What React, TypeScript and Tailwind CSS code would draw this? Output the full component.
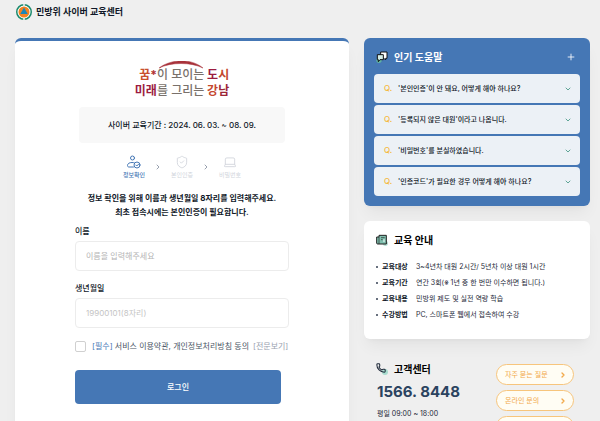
import { Check, ChevronDown, ChevronRight, Laptop, Phone, Plus, ShieldCheck } from 'lucide-react'

const QUESTIONS = [
  "'본인인증'이 안 돼요, 어떻게 해야 하나요?",
  "'등록되지 않은 대원'이라고 나옵니다.",
  "'비밀번호'를 분실하였습니다.",
  "'인증코드'가 필요한 경우 어떻게 해야 하나요?",
]

const GUIDE = [
  { label: '교육대상', value: '3~4년차 대원 2시간/ 5년차 이상 대원 1시간' },
  { label: '교육기간', value: '연간 3회(※ 1년 중 한 번만 이수하면 됩니다.)' },
  { label: '교육내용', value: '민방위 제도 및 실전 역량 학습' },
  { label: '수강방법', value: 'PC, 스마트폰 웹에서 접속하여 수강' },
]

const LINKS = ['자주 묻는 질문', '온라인 문의']

// ---------------------------------------------------------------------------
// Icons
// ---------------------------------------------------------------------------

function Emblem() {
  return (
    <svg viewBox="0 0 32 32" className="size-4" aria-hidden="true">
      <circle cx="16" cy="16" r="14.500" fill="#fff" stroke="#1c8a6d" strokeWidth="3" />
      <path d="M16 0v5M16 27v5" stroke="#efefef" strokeWidth="3" />
      <circle cx="16" cy="16" r="11" fill="#f58220" />
      <path d="M16 7l7.500 13h-15z" fill="#1b86b8" />
    </svg>
  )
}

function PersonCheckIcon() {
  return (
    <svg viewBox="0 0 28 28" className="size-3.5" fill="none" stroke="#4577b5" strokeWidth="2" strokeLinecap="round" strokeLinejoin="round" aria-hidden="true">
      <circle cx="11" cy="6" r="4" />
      <path d="M13 24H4c-2 0-3-1-3-3 0-4 4-6 9-6 2 0 3 .3 4.500.8" />
      <circle cx="20" cy="20" r="6" />
      <path d="M17.500 20l2 2 3.500-3.500" />
    </svg>
  )
}

function ChatIcon() {
  return (
    <svg viewBox="0 0 36 36" className="size-3" aria-hidden="true">
      <circle cx="9" cy="28" r="8" fill="#5fb3a3" />
      <path d="M14 3h19v19h-4v5l-5-5H14z" fill="#fff" stroke="#111" strokeWidth="3" />
      <path d="M4 11h18v15H12l-5 6v-6H4z" fill="#d5eee8" stroke="#111" strokeWidth="3" />
    </svg>
  )
}

function BookIcon() {
  return (
    <svg viewBox="0 0 36 36" className="size-3" aria-hidden="true">
      <circle cx="28" cy="28" r="8" fill="#b5e0d5" />
      <path d="M9 4h22v26H5c-2 0-3-1-3-3V9h7z" fill="#7fbfae" stroke="#222" strokeWidth="3" strokeLinejoin="round" />
      <path d="M9 9v21M15 11h11M15 17h5" stroke="#222" strokeWidth="2" fill="none" />
      <path d="M22 16h4v8h-4z" fill="#d8f0ea" />
    </svg>
  )
}

// ---------------------------------------------------------------------------
// Sections
// ---------------------------------------------------------------------------

function Slogan() {
  return (
    <div className="relative mx-auto text-right text-xs leading-4 font-bold text-stone-500">
      <svg viewBox="0 0 44 8" className="absolute -top-1.5 left-6 h-2 w-11" aria-hidden="true">
        <path d="M0 7C12-2 32-3 44 7 32 1 12 1 0 7z" fill="#a8323a" stroke="#a8323a" strokeWidth="0.500" />
      </svg>
      <p>
        <span className="text-[#c8502d]">꿈</span>
        <span className="text-[#b03030]">*</span>
        <span className="font-medium">이 모이는</span> <span className="text-[#9c1c40]">도</span>
        <span className="text-[#c4472d]">시</span>
      </p>
      <p>
        <span className="text-[#9c1c40]">미래</span>
        <span className="font-medium">를 그리는</span> <span className="text-[#c4472d]">강</span>
        <span className="text-[#9c2638]">남</span>
      </p>
    </div>
  )
}

function Steps() {
  return (
    <ol className="mx-auto mt-3 flex items-center gap-2 text-[6px] leading-2 whitespace-nowrap text-gray-300">
      <li className="flex w-6 flex-col items-center gap-0.5 font-medium text-[#4577b5]">
        <PersonCheckIcon />
        정보확인
      </li>
      <li aria-hidden="true">
        <ChevronRight className="size-2 text-gray-400" strokeWidth={3} />
      </li>
      <li className="flex w-6 flex-col items-center gap-0.5">
        <ShieldCheck className="size-3.5" strokeWidth={1.5} />
        본인인증
      </li>
      <li aria-hidden="true">
        <ChevronRight className="size-2 text-gray-400" strokeWidth={3} />
      </li>
      <li className="flex w-6 flex-col items-center gap-0.5">
        <Laptop className="size-3.5" strokeWidth={1.5} />
        비밀번호
      </li>
    </ol>
  )
}

function LoginCard() {
  return (
    <main className="flex flex-1 flex-col rounded-t-md border-t-3 border-[#4577b5] bg-white px-15 pt-[26px] shadow-lg shadow-black/5">
      <Slogan />
      <p className="mx-1 mt-2 rounded bg-[#f8f8f8] text-center text-[8px] leading-9 font-medium text-gray-900">
        사이버 교육기간 : 2024. 06. 03. ~ 08. 09.
      </p>
      <Steps />
      <p className="mt-3 text-center text-[8px] leading-3.5 font-bold whitespace-nowrap text-gray-900">
        정보 확인을 위해 이름과 생년월일 8자리를 입력해주세요.
        <br />
        최초 접속시에는 본인인증이 필요합니다.
      </p>
      <form className="flex flex-col text-[8px]" onSubmit={(e) => e.preventDefault()}>
        <label htmlFor="name" className="mt-1.5 leading-3 font-medium text-gray-900">이름</label>
        <input
          id="name"
          type="text"
          placeholder="이름을 입력해주세요"
          className="mt-1 h-[30px] rounded border border-[#ececec] px-2.5 placeholder:text-[#b4b4b4]"
        />
        <label htmlFor="birth" className="mt-[11px] leading-3 font-medium text-gray-900">생년월일</label>
        <input
          id="birth"
          type="text"
          placeholder="19900101(8자리)"
          className="mt-1 h-[30px] rounded border border-[#ececec] px-2.5 placeholder:text-[#c4c4c4]"
        />
        <div className="mt-3 flex items-center gap-1.5 leading-3 whitespace-nowrap text-gray-600">
          <span className="relative flex size-[11px] shrink-0">
            <input id="agree" type="checkbox" className="peer size-full appearance-none rounded-xs border border-[#d0d0d0] bg-white" />
            <Check className="pointer-events-none absolute inset-0 hidden size-full text-[#4577b5] peer-checked:block" />
          </span>
          <label htmlFor="agree">
            <span className="text-[#4577b5]">[필수]</span> 서비스 이용약관, 개인정보처리방침 동의
          </label>
          <a href="#terms" className="-ml-0.5 text-gray-400">[전문보기]</a>
        </div>
        <button type="submit" className="mt-[18px] mr-2 rounded bg-[#4577b5] leading-[34px] font-medium text-white">
          로그인
        </button>
      </form>
    </main>
  )
}

function HelpPanel() {
  return (
    <section className="rounded-md bg-[#4577b5] px-2.5 pt-3 pb-2.5 shadow-lg shadow-black/5">
      <div className="flex items-center px-0.5">
        <ChatIcon />
        <h2 className="ml-1.5 text-[10px] leading-3.5 font-bold text-white">인기 도움말</h2>
        <button type="button" aria-label="더보기" className="mr-0.5 ml-auto text-white">
          <Plus className="size-2.5" strokeWidth={2} />
        </button>
      </div>
      <ul className="mt-2.5 flex flex-col gap-0.5">
        {QUESTIONS.map((q) => (
          <li key={q}>
            <button
              type="button"
              className="flex w-full items-center rounded bg-[#ecf1f6] px-2.5 text-left text-[7px] leading-[29px] font-medium whitespace-nowrap text-gray-900"
            >
              <span className="w-3.5 text-[8px] text-[#f5b83d]">Q.</span>
              {q}
              <ChevronDown className="-mr-0.5 ml-auto size-2 text-[#5fa596]" strokeWidth={3} />
            </button>
          </li>
        ))}
      </ul>
    </section>
  )
}

function GuidePanel() {
  return (
    <section className="mt-[15px] rounded-md bg-white px-3 pt-3 pb-4 shadow-lg shadow-black/5">
      <div className="flex items-center gap-1.5">
        <BookIcon />
        <h2 className="text-[10px] leading-3.5 font-bold text-black">교육 안내</h2>
      </div>
      <ul className="mt-3 text-[7px] leading-4 whitespace-nowrap text-gray-800">
        {GUIDE.map((row) => (
          <li key={row.label} className="flex items-center">
            <span className="mr-1 size-0.5 rounded-full bg-gray-700" />
            <strong className="w-[34px] font-bold text-gray-900">{row.label}</strong>
            {row.value}
          </li>
        ))}
      </ul>
    </section>
  )
}

function ContactSection() {
  return (
    <section className="mt-[25px] flex items-start justify-between pr-4 pl-3">
      <div>
        <div className="flex h-2.5 items-center gap-1.5">
          <span className="relative flex size-3">
            <span className="absolute right-0 bottom-0 size-1.5 rounded-full bg-[#a8dccf]" />
            <Phone className="relative size-2.5 text-gray-800" strokeWidth={2.5} />
          </span>
          <h2 className="text-[10px] leading-2.5 font-bold text-black">고객센터</h2>
        </div>
        <p className="mt-1.5 ml-px font-[Inter] text-[15px] leading-6 font-bold text-[#2b4360]">1566. 8448</p>
        <p className="mt-1 ml-px text-[7px] leading-3 text-gray-800">평일 09:00 ~ 18:00</p>
      </div>
      <nav className="flex w-[78px] flex-col gap-[5px] text-[7px] text-[#f2a94a]">
        {LINKS.map((link) => (
          <a
            key={link}
            href="#help"
            className="flex items-center justify-between rounded-full border border-[#f7c57c] bg-[#fffdf4] pr-1.5 pl-2 leading-[19px]"
          >
            {link}
            <ChevronRight className="size-2" strokeWidth={4} />
          </a>
        ))}
        <span className="h-[21px] rounded-full border border-[#f7c57c] bg-[#fffdf4]" />
      </nav>
    </section>
  )
}

// ---------------------------------------------------------------------------
// Page
// ---------------------------------------------------------------------------

export default function App() {
  return (
    <div className="flex h-screen flex-col overflow-hidden bg-[#efefef] font-['Inter','Noto_Sans_CJK_KR',sans-serif]" lang="ko">
      <header className="flex items-center gap-1 px-4 pt-1 pb-[18px]">
        <Emblem />
        <h1 className="text-[9px] leading-4 font-bold text-gray-900">민방위 사이버 교육센터</h1>
      </header>
      <div className="flex flex-1 gap-[15px] pr-2.5 pl-[15px]">
        <LoginCard />
        <aside className="w-[226px] shrink-0">
          <HelpPanel />
          <GuidePanel />
          <ContactSection />
        </aside>
      </div>
    </div>
  )
}
